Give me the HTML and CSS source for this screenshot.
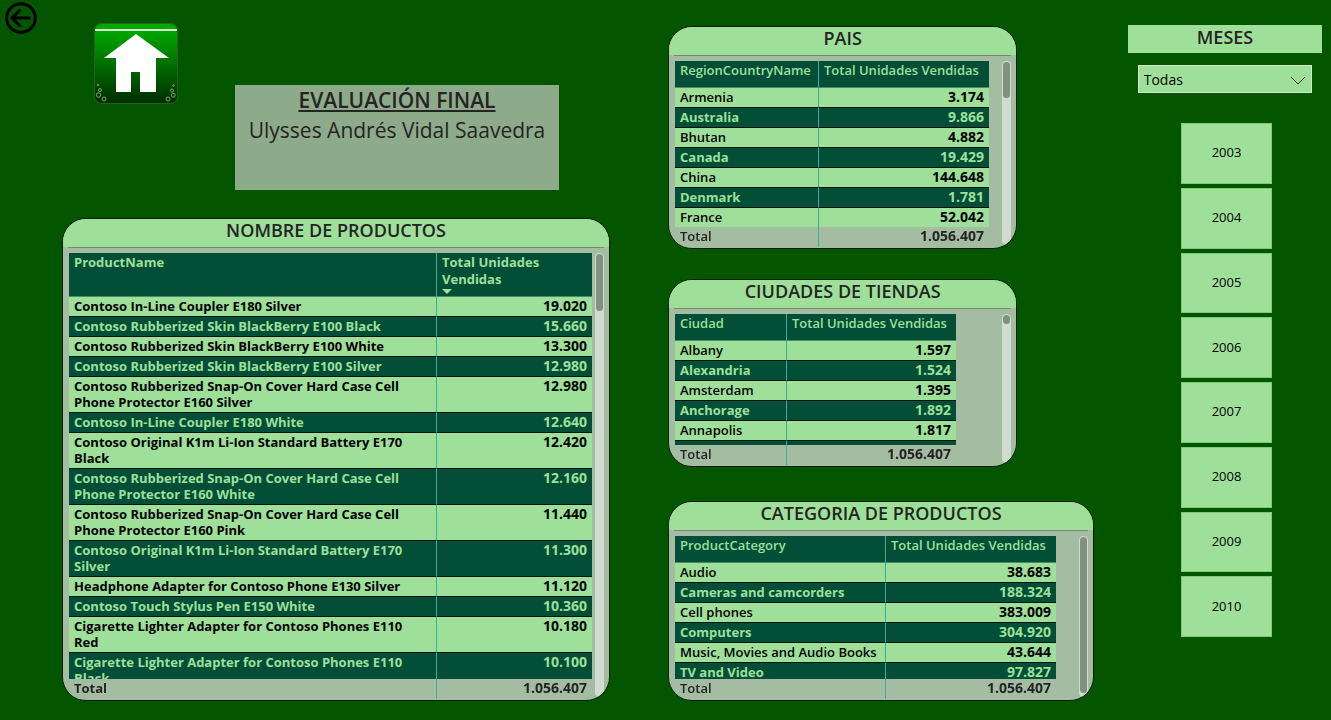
FILE: index.html
```html
<!DOCTYPE html>
<html lang="es">
<head>
<meta charset="utf-8">
<title>Evaluación final</title>
<link rel="stylesheet" href="styles.css">
</head>
<body>
<main class="report">
  <div class="col col-left">
    <header class="top">
      <a class="back" href="#" aria-label="Volver">
        <svg width="32" height="32" viewBox="0 0 32 32" fill="none" stroke="#000" stroke-width="3"><circle cx="16" cy="16" r="14.3"/><path d="M25.500 16H8M15.500 7.500L7 16L15.500 24.500"/></svg>
      </a>
      <a class="home" href="#" aria-label="Inicio">
        <svg width="86" height="83" viewBox="0 0 86 83">
          <defs><linearGradient id="g" x1="0" y1="0" x2="0" y2="1"><stop offset="0" stop-color="#00ad00"/><stop offset=".15" stop-color="#00a000"/><stop offset="1" stop-color="#002c00"/></linearGradient></defs>
          <rect x="1.5" y="1.5" width="83" height="80" rx="7" fill="url(#g)" stroke="#285f22"/>
          <path d="M2 8H84" stroke="#d5f3d2" stroke-width="2"/>
          <path d="M43 12L76 36H63V70H47V50H38V70H23V36H11Z" fill="#fff"/>
          <g fill="none" stroke="#7f9f7c"><circle cx="5" cy="63" r=".8"/><circle cx="7" cy="68" r="1.500"/><circle cx="5.500" cy="73" r="2.200"/><circle cx="11" cy="77" r="2"/><circle cx="80.500" cy="63.500" r=".8"/><circle cx="79" cy="68.500" r="1.500"/><rect x="78.500" y="71.500" width="3.500" height="3.500" rx="1"/><circle cx="75" cy="77" r="2"/></g>
        </svg>
      </a>
      <div class="intro">
        <h1>EVALUACIÓN FINAL</h1>
        <p>Ulysses Andrés Vidal Saavedra</p>
      </div>
    </header>
    <section class="panel products">
      <h2>NOMBRE DE PRODUCTOS</h2>
      <div class="body">
        <div class="scroll">
          <table>
            <colgroup><col class="name"><col></colgroup>
            <thead><tr><th>ProductName</th><th>Total Unidades Vendidas<svg class="sort" width="10" height="5" viewBox="0 0 10 5"><path d="M0 0H10L5 5Z" fill="#9ee09a"/></svg></th></tr></thead>
            <tbody>
              <tr><td>Contoso In-Line Coupler E180 Silver</td><td>19.020</td></tr>
              <tr><td>Contoso Rubberized Skin BlackBerry E100 Black</td><td>15.660</td></tr>
              <tr><td>Contoso Rubberized Skin BlackBerry E100 White</td><td>13.300</td></tr>
              <tr><td>Contoso Rubberized Skin BlackBerry E100 Silver</td><td>12.980</td></tr>
              <tr><td>Contoso Rubberized Snap-On Cover Hard Case Cell Phone Protector E160 Silver</td><td>12.980</td></tr>
              <tr><td>Contoso In-Line Coupler E180 White</td><td>12.640</td></tr>
              <tr><td>Contoso Original K1m Li-Ion Standard Battery E170 Black</td><td>12.420</td></tr>
              <tr><td>Contoso Rubberized Snap-On Cover Hard Case Cell Phone Protector E160 White</td><td>12.160</td></tr>
              <tr><td>Contoso Rubberized Snap-On Cover Hard Case Cell Phone Protector E160 Pink</td><td>11.440</td></tr>
              <tr><td>Contoso Original K1m Li-Ion Standard Battery E170 Silver</td><td>11.300</td></tr>
              <tr><td>Headphone Adapter for Contoso Phone E130 Silver</td><td>11.120</td></tr>
              <tr><td>Contoso Touch Stylus Pen E150 White</td><td>10.360</td></tr>
              <tr><td>Cigarette Lighter Adapter for Contoso Phones E110 Red</td><td>10.180</td></tr>
              <tr><td>Cigarette Lighter Adapter for Contoso Phones E110 Black</td><td>10.100</td></tr>
            </tbody>
            <tfoot><tr><td>Total</td><td>1.056.407</td></tr></tfoot>
          </table>
        </div>
        <div class="track"><div class="thumb" style="height:13%"></div></div>
      </div>
    </section>
  </div>

  <div class="col col-mid">
    <section class="panel countries">
      <h2>PAIS</h2>
      <div class="body">
        <div class="scroll">
          <table>
            <colgroup><col class="name"><col></colgroup>
            <thead><tr><th>RegionCountryName</th><th>Total Unidades Vendidas</th></tr></thead>
            <tbody>
              <tr><td>Armenia</td><td>3.174</td></tr>
              <tr><td>Australia</td><td>9.866</td></tr>
              <tr><td>Bhutan</td><td>4.882</td></tr>
              <tr><td>Canada</td><td>19.429</td></tr>
              <tr><td>China</td><td>144.648</td></tr>
              <tr><td>Denmark</td><td>1.781</td></tr>
              <tr><td>France</td><td>52.042</td></tr>
            </tbody>
            <tfoot><tr><td>Total</td><td>1.056.407</td></tr></tfoot>
          </table>
        </div>
        <div class="track"><div class="thumb" style="height:20%"></div></div>
      </div>
    </section>
    <section class="panel cities">
      <h2>CIUDADES DE TIENDAS</h2>
      <div class="body">
        <div class="scroll">
          <table>
            <colgroup><col class="name"><col></colgroup>
            <thead><tr><th>Ciudad</th><th>Total Unidades Vendidas</th></tr></thead>
            <tbody>
              <tr><td>Albany</td><td>1.597</td></tr>
              <tr><td>Alexandria</td><td>1.524</td></tr>
              <tr><td>Amsterdam</td><td>1.395</td></tr>
              <tr><td>Anchorage</td><td>1.892</td></tr>
              <tr><td>Annapolis</td><td>1.817</td></tr>
              <tr><td></td><td></td></tr>
            </tbody>
            <tfoot><tr><td>Total</td><td>1.056.407</td></tr></tfoot>
          </table>
        </div>
        <div class="track"><div class="thumb" style="height:6%"></div></div>
      </div>
    </section>
    <section class="panel categories">
      <h2>CATEGORIA DE PRODUCTOS</h2>
      <div class="body">
        <div class="scroll">
          <table>
            <colgroup><col class="name"><col></colgroup>
            <thead><tr><th>ProductCategory</th><th>Total Unidades Vendidas</th></tr></thead>
            <tbody>
              <tr><td>Audio</td><td>38.683</td></tr>
              <tr><td>Cameras and camcorders</td><td>188.324</td></tr>
              <tr><td>Cell phones</td><td>383.009</td></tr>
              <tr><td>Computers</td><td>304.920</td></tr>
              <tr><td>Music, Movies and Audio Books</td><td>43.644</td></tr>
              <tr><td>TV and Video</td><td>97.827</td></tr>
            </tbody>
            <tfoot><tr><td>Total</td><td>1.056.407</td></tr></tfoot>
          </table>
        </div>
        <div class="track"><div class="thumb" style="height:98%"></div></div>
      </div>
    </section>
  </div>

  <aside class="col col-right">
    <h2 class="months-title"><label for="months">MESES</label></h2>
    <div class="select-wrap">
      <select id="months"><option>Todas</option></select>
      <svg class="chevron" width="16" height="9" viewBox="0 0 16 9" fill="none" stroke="#333"><path d="M1 1L8 8L15 1"/></svg>
    </div>
    <div class="years">
      <button type="button">2003</button>
      <button type="button">2004</button>
      <button type="button">2005</button>
      <button type="button">2006</button>
      <button type="button">2007</button>
      <button type="button">2008</button>
      <button type="button">2009</button>
      <button type="button">2010</button>
    </div>
  </aside>
</main>
</body>
</html>
```
FILE: styles.css
```css
* { box-sizing: border-box; }
:root {
  --light: #9ee09a;
  --dark: #034e36;
  --panel: #a3bca2;
  --ink: #252423;
}
body {
  margin: 0;
  background: #045500;
  color: var(--ink);
  font-family: "Open Sans", "Noto Sans", sans-serif;
  font-size: 13px;
}
h1, h2, p { margin: 0; }
.report {
  display: grid;
  grid-template-columns: 610fr 58px 426fr 34px 194fr;
  height: 100vh;
  min-height: 640px;
  padding-right: 9px;
}
.col { display: flex; flex-direction: column; min-height: 0; min-width: 0; }
.col-left { grid-column: 1; padding-bottom: 19px; }
.col-mid { grid-column: 3; padding: 26px 0 19px; }
.col-right { grid-column: 5; padding: 25px 0 83px; align-items: center; }

.top { display: flex; align-items: flex-start; padding: 2px 51px 28px 5px; }
.back, .home { display: block; }
.back svg, .home svg { display: block; }
.home { margin: 20px 56px 0 56px; }
.intro {
  flex: 1;
  height: 105px;
  margin-top: 83px;
  background: #8dab8a;
  text-align: center;
  white-space: nowrap;
}
.intro h1, .intro p { font-size: 21px; line-height: 30px; }
.intro h1 { font-weight: 600; text-decoration: underline; }

.panel {
  display: flex;
  flex-direction: column;
  min-height: 0;
  overflow: hidden;
  border: 1px solid #0b1f08;
  border-radius: 24px;
  background: var(--panel);
}
.panel h2, .months-title {
  height: 28px;
  flex: none;
  background: var(--light);
  font-size: 18px;
  font-weight: 600;
  line-height: 22px;
  text-align: center;
}
.months-title { width: 100%; line-height: 24px; }
.products { flex: 1; margin-left: 62px; }
.countries { flex: 223; width: 82%; margin-bottom: 30px; }
.cities { flex: 187; width: 82%; margin-bottom: 34px; }
.categories { flex: 200; }

.body {
  display: flex;
  flex: 1;
  min-height: 0;
  justify-content: space-between;
  gap: 3px;
  margin: 0 5px;
  padding: 5px 0 1px 1px;
  border-top: 1px solid #758a73;
}
.products .scroll { flex: 1; }
.scroll { overflow: hidden; }
.track {
  width: 9px;
  flex: none;
  margin-bottom: 2px;
  padding: 1px;
  border-radius: 5px;
  background: #d1dcd0;
}
.thumb { border-radius: 4px; background: #82917f; }

table { width: 100%; table-layout: fixed; border-spacing: 0; line-height: 16px; font-weight: 600; }
.products table { font-weight: 700; }
.products .name { width: 368px; }
.countries table { width: 314px; }
.countries .name { width: 144px; }
.cities table { width: 281px; }
.cities .name { width: 112px; }
.categories table { width: 381px; }
.categories .name { width: 211px; }
th {
  height: 27px;
  padding: 1px 5px 0;
  background: var(--dark);
  color: var(--light);
  font-weight: 600;
  line-height: 17px;
  text-align: left;
  vertical-align: top;
  border-bottom: 1px solid #4c8b68;
}
.products th { height: 44px; font-weight: 700; }
.products th:last-child { padding-right: 40px; }
.products td:first-child { padding-right: 20px; }
.sort { display: block; margin-top: 1px; }
td { height: 20px; padding: 1px 5px 2px; vertical-align: top; border-bottom: 1px solid #04140d; }
tbody tr { background: var(--light); color: #000; }
tbody tr:nth-child(even) { background: var(--dark); color: var(--light); font-weight: 700; }
td:last-child { text-align: right; font-size: 14px; font-weight: 700; }
th:first-child, td:first-child { border-right: 1px solid #3fac98; }
tfoot { position: sticky; bottom: 0; background: var(--panel); }
tfoot td { border-bottom: 0; }

.select-wrap { position: relative; width: 90%; margin-top: 12px; }
select {
  display: block;
  width: 100%;
  height: 28px;
  padding: 0 5px;
  appearance: none;
  border: 1px solid #d0e8cd;
  border-radius: 0;
  background: var(--light);
  color: #000;
  font: 14px "Open Sans", "Noto Sans", sans-serif;
}
.chevron { position: absolute; right: 6px; top: 11px; pointer-events: none; }
.years { display: flex; flex: 1; flex-direction: column; gap: 4px; width: 47%; margin: 30px 0 0 3px; }
.years button {
  flex: 1;
  padding: 0 0 2px;
  border: 1px solid #7fca79;
  background: var(--light);
  color: #000;
  font: 500 13px "Open Sans", "Noto Sans", sans-serif;
}
```
